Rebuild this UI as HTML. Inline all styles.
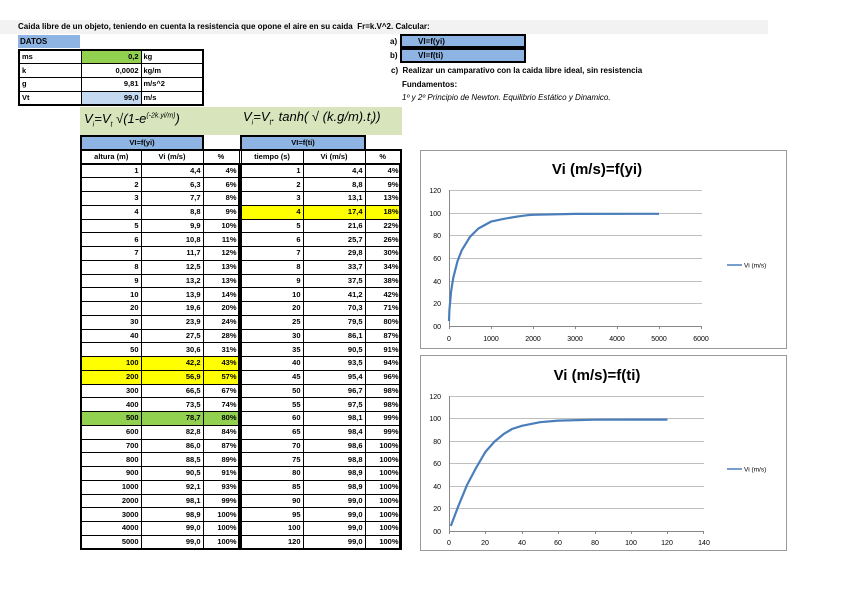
<!DOCTYPE html>
<html><head><meta charset="utf-8"><style>
*{margin:0;padding:0;box-sizing:border-box}
body{width:848px;height:599px;background:#fff;position:relative;overflow:hidden;font-family:"Liberation Sans",sans-serif;color:#000}
.a{position:absolute;white-space:nowrap}
.t{font-size:8px;font-weight:bold}
table{border-collapse:collapse;position:absolute;table-layout:fixed}
td{border:1px solid #000;font-size:7.5px;font-weight:bold;height:13.75px;padding:0 2px;text-align:right;overflow:hidden;white-space:nowrap;line-height:12px}
td.c{text-align:center}
td.l{text-align:left}
td.n{border:none}
.y{background:#ffff00}.g{background:#92d050}.b{background:#8db4e2}
</style></head><body>
<div class="a t" style="left:0;top:20px;width:768px;height:14px;background:#f2f2f2;padding-left:18px;line-height:14px">Caida libre de un objeto, teniendo en cuenta la resistencia que opone el aire en su caida&nbsp; Fr=k.V^2. Calcular:</div>
<div class="a t" style="left:18px;top:35px;width:62px;height:13px;background:#8db4e2;line-height:13px;padding-left:2px">DATOS</div>
<table style="left:18px;top:49px;width:184px;border:2px solid #000">
<colgroup><col style="width:62px"><col style="width:60px"><col style="width:62px"></colgroup>
<tr><td class="l">ms</td><td class="g">0,2</td><td class="l">kg</td></tr>
<tr><td class="l">k</td><td>0,0002</td><td class="l">kg/m</td></tr>
<tr><td class="l">g</td><td>9,81</td><td class="l">m/s^2</td></tr>
<tr><td class="l">Vt</td><td style="background:#c5d9f1">99,0</td><td class="l">m/s</td></tr>
</table>
<div class="a t" style="left:390px;top:37px">a)</div>
<div class="a t" style="left:390px;top:51px">b)</div>
<div class="a t" style="left:400px;top:34px;width:126px;height:14px;background:#8db4e2;border:2px solid #000;padding-left:16px;line-height:11px;text-align:left">VI=f(yi)</div>
<div class="a t" style="left:400px;top:48px;width:126px;height:15px;background:#8db4e2;border:2px solid #000;padding-left:16px;line-height:11px;text-align:left">VI=f(ti)</div>
<div class="a t" style="left:391px;top:66px">c)&nbsp; Realizar un camparativo con la caida libre ideal, sin resistencia</div>
<div class="a t" style="left:402px;top:80px">Fundamentos:</div>
<div class="a" style="left:402px;top:93px;font-size:8px;font-style:italic">1º y 2º Principio de Newton. Equilibrio Estático y Dinamico.</div>
<div class="a" style="left:80px;top:107px;width:322px;height:28px;background:#d8e4bc"></div>
<div class="a" style="left:84px;top:111px;font-size:13px;font-style:italic">V<sub style="font-size:7px">i</sub>=V<sub style="font-size:7px">t</sub> √(1-e<sup style="font-size:7px">(-2k.yi/m)</sup>)</div>
<div class="a" style="left:243px;top:109px;font-size:13px;font-style:italic">V<sub style="font-size:7px">i</sub>=V<sub style="font-size:7px">t</sub>. tanh( √ (k.g/m).t<sub style="font-size:7px">i</sub>))</div>

<table style="left:80px;top:135px;width:320px">
<colgroup><col style="width:60px"><col style="width:62px"><col style="width:36px"><col style="width:2px"><col style="width:62px"><col style="width:62px"><col style="width:36px"></colgroup>
<tr><td colspan="2" class="c b" style="border:2px solid #000">VI=f(yi)</td><td class="n"></td><td class="n"></td><td colspan="2" class="c b" style="border:2px solid #000">VI=f(ti)</td><td class="n"></td></tr>
<tr style="border:2px solid #000"><td class="c">altura (m)</td><td class="c">Vi (m/s)</td><td class="c">%</td><td class="n"></td><td class="c">tiempo (s)</td><td class="c">Vi (m/s)</td><td class="c">%</td></tr>
<tr><td>1</td><td>4,4</td><td>4%</td><td class="n"></td><td>1</td><td>4,4</td><td>4%</td></tr>
<tr><td>2</td><td>6,3</td><td>6%</td><td class="n"></td><td>2</td><td>8,8</td><td>9%</td></tr>
<tr><td>3</td><td>7,7</td><td>8%</td><td class="n"></td><td>3</td><td>13,1</td><td>13%</td></tr>
<tr><td>4</td><td>8,8</td><td>9%</td><td class="n"></td><td class="y">4</td><td class="y">17,4</td><td class="y">18%</td></tr>
<tr><td>5</td><td>9,9</td><td>10%</td><td class="n"></td><td>5</td><td>21,6</td><td>22%</td></tr>
<tr><td>6</td><td>10,8</td><td>11%</td><td class="n"></td><td>6</td><td>25,7</td><td>26%</td></tr>
<tr><td>7</td><td>11,7</td><td>12%</td><td class="n"></td><td>7</td><td>29,8</td><td>30%</td></tr>
<tr><td>8</td><td>12,5</td><td>13%</td><td class="n"></td><td>8</td><td>33,7</td><td>34%</td></tr>
<tr><td>9</td><td>13,2</td><td>13%</td><td class="n"></td><td>9</td><td>37,5</td><td>38%</td></tr>
<tr><td>10</td><td>13,9</td><td>14%</td><td class="n"></td><td>10</td><td>41,2</td><td>42%</td></tr>
<tr><td>20</td><td>19,6</td><td>20%</td><td class="n"></td><td>20</td><td>70,3</td><td>71%</td></tr>
<tr><td>30</td><td>23,9</td><td>24%</td><td class="n"></td><td>25</td><td>79,5</td><td>80%</td></tr>
<tr><td>40</td><td>27,5</td><td>28%</td><td class="n"></td><td>30</td><td>86,1</td><td>87%</td></tr>
<tr><td>50</td><td>30,6</td><td>31%</td><td class="n"></td><td>35</td><td>90,5</td><td>91%</td></tr>
<tr><td class="y">100</td><td class="y">42,2</td><td class="y">43%</td><td class="n"></td><td>40</td><td>93,5</td><td>94%</td></tr>
<tr><td class="y">200</td><td class="y">56,9</td><td class="y">57%</td><td class="n"></td><td>45</td><td>95,4</td><td>96%</td></tr>
<tr><td>300</td><td>66,5</td><td>67%</td><td class="n"></td><td>50</td><td>96,7</td><td>98%</td></tr>
<tr><td>400</td><td>73,5</td><td>74%</td><td class="n"></td><td>55</td><td>97,5</td><td>98%</td></tr>
<tr><td class="g">500</td><td class="g">78,7</td><td class="g">80%</td><td class="n"></td><td>60</td><td>98,1</td><td>99%</td></tr>
<tr><td>600</td><td>82,8</td><td>84%</td><td class="n"></td><td>65</td><td>98,4</td><td>99%</td></tr>
<tr><td>700</td><td>86,0</td><td>87%</td><td class="n"></td><td>70</td><td>98,6</td><td>100%</td></tr>
<tr><td>800</td><td>88,5</td><td>89%</td><td class="n"></td><td>75</td><td>98,8</td><td>100%</td></tr>
<tr><td>900</td><td>90,5</td><td>91%</td><td class="n"></td><td>80</td><td>98,9</td><td>100%</td></tr>
<tr><td>1000</td><td>92,1</td><td>93%</td><td class="n"></td><td>85</td><td>98,9</td><td>100%</td></tr>
<tr><td>2000</td><td>98,1</td><td>99%</td><td class="n"></td><td>90</td><td>99,0</td><td>100%</td></tr>
<tr><td>3000</td><td>98,9</td><td>100%</td><td class="n"></td><td>95</td><td>99,0</td><td>100%</td></tr>
<tr><td>4000</td><td>99,0</td><td>100%</td><td class="n"></td><td>100</td><td>99,0</td><td>100%</td></tr>
<tr style="border-bottom:2px solid #000"><td>5000</td><td>99,0</td><td>100%</td><td class="n"></td><td>120</td><td>99,0</td><td>100%</td></tr>
</table>
<div class="a" style="left:80px;top:163px;width:160px;height:387px;border:2px solid #000"></div>
<div class="a" style="left:239px;top:163px;width:162px;height:387px;border:2px solid #000"></div>

<svg class="a" style="left:0;top:0" width="848" height="599" font-family="Liberation Sans, sans-serif">
<g fill="#fff" stroke="#999" stroke-width="1">
<rect x="420.5" y="150.5" width="366" height="198"/>
<rect x="420.5" y="355.5" width="366" height="195"/>
</g>
<g font-weight="bold" text-anchor="middle" font-size="15">
<text x="597" y="174">Vi (m/s)=f(yi)</text>
<text x="597" y="380">Vi (m/s)=f(ti)</text>
</g>
<g stroke="#bfbfbf" stroke-width="1">
<path d="M449 190.5H702M449 213.5H702M449 235.5H702M449 258.5H702M449 281.5H702M449 303.5H702"/>
<path d="M449 396.5H704M449 418.5H704M449 441.5H704M449 463.5H704M449 486.5H704M449 508.5H704"/>
</g>
<g stroke="#888" stroke-width="1" fill="none">
<path d="M449.5 190V326.5H702M491.5 326v3M533.5 326v3M575.5 326v3M617.5 326v3M659.5 326v3M701.5 326v3M449.5 326v3"/>
<path d="M449.5 396V531.5H704M449.5 531v3M485.5 531v3M522.5 531v3M558.5 531v3M595.5 531v3M631.5 531v3M667.5 531v3M703.5 531v3"/>
</g>
<g font-size="7" text-anchor="end">
<text x="441" y="193">120</text><text x="441" y="216">100</text><text x="441" y="238">80</text><text x="441" y="261">60</text><text x="441" y="284">40</text><text x="441" y="306">20</text><text x="441" y="329">00</text>
<text x="441" y="399">120</text><text x="441" y="421">100</text><text x="441" y="444">80</text><text x="441" y="466">60</text><text x="441" y="489">40</text><text x="441" y="511">20</text><text x="441" y="534">00</text>
</g>
<g font-size="7" text-anchor="middle">
<text x="449" y="341">0</text><text x="491" y="341">1000</text><text x="533" y="341">2000</text><text x="575" y="341">3000</text><text x="617" y="341">4000</text><text x="659" y="341">5000</text><text x="701" y="341">6000</text>
<text x="449" y="545">0</text><text x="485" y="545">20</text><text x="522" y="545">40</text><text x="558" y="545">60</text><text x="595" y="545">80</text><text x="631" y="545">100</text><text x="667" y="545">120</text><text x="704" y="545">140</text>
</g>
<g stroke="#4a7ebb" stroke-width="2.2" fill="none" stroke-linejoin="round">
<path d="M449 321L449.4 310.2L451.1 291.3L453.2 278.2L457.4 261.5L461.6 250.6L470 236.8L478.4 228.5L491 221.6C505 218.5 520 215.5 533 214.8L575 213.9L659 213.8"/>
<path d="M450.8 526L458.1 506.7L467.2 484.6L476 468L485.4 451.9L494.5 441.6L503.6 434.1L512 429L521.9 425.8L540 422.2L558.3 420.6L594.7 419.7L667.5 419.6"/>
<path d="M727 265H742M727 469H742" stroke-width="1.6"/>
</g>
<g font-size="6.5"><text x="744" y="267.5">Vi (m/s)</text><text x="744" y="471.5">Vi (m/s)</text></g>
</svg>
</body></html>
